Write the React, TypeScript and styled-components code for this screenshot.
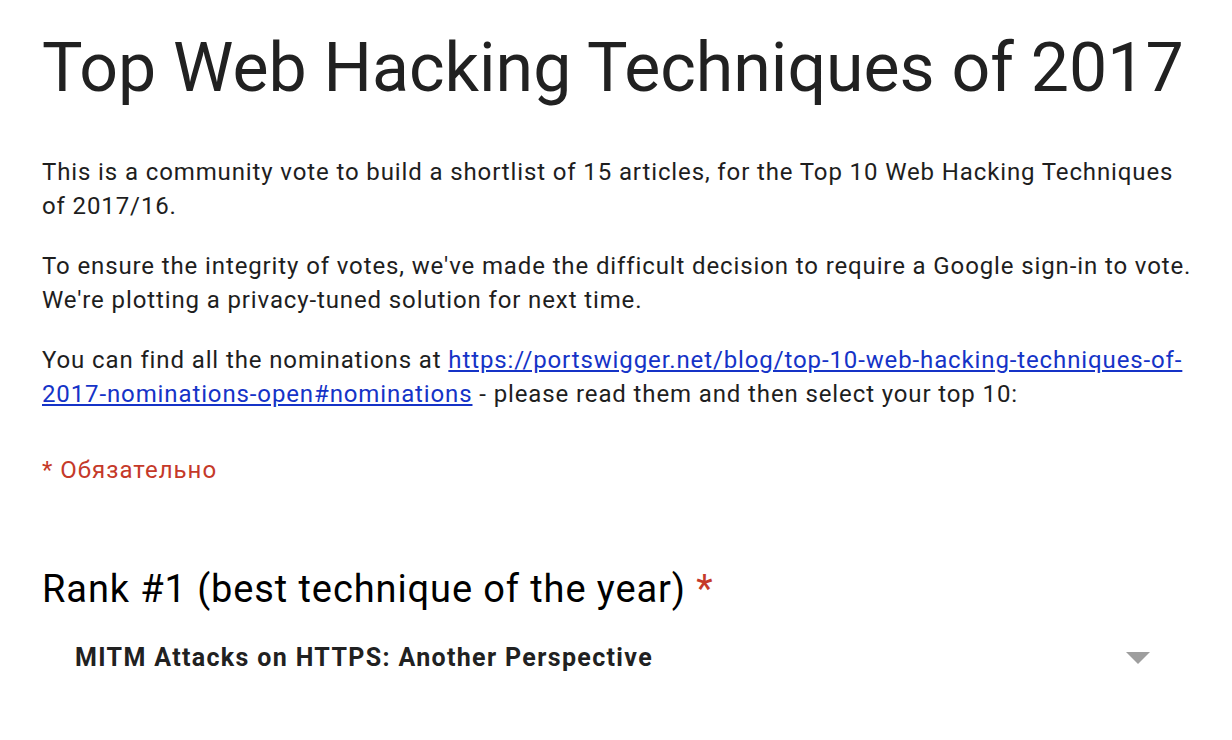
import React from "react";
import styled, { createGlobalStyle } from "styled-components";

const GlobalStyle = createGlobalStyle`
  html, body {
    margin: 0;
    padding: 0;
    background: #ffffff;
  }
  body {
    font-family: Roboto, "Noto Sans", Arial, sans-serif;
    color: #212121;
  }
`;

const NOMINATIONS_URL =
  "https://portswigger.net/blog/top-10-web-hacking-techniques-of-2017-nominations-open#nominations";

const App: React.FC = () => {
  return (
    <>
      <GlobalStyle />
      <Container>
        <Title>Top Web Hacking Techniques of 2017</Title>
        <Description>
          <Paragraph>
            This is a community vote to build a shortlist of 15 articles, for the Top 10 Web
            Hacking Techniques of 2017/16.
          </Paragraph>
          <Paragraph>
            To ensure the integrity of votes, we've made the difficult decision to require a
            Google sign-in to vote. We're plotting a privacy-tuned solution for next time.
          </Paragraph>
          <Paragraph>
            You can find all the nominations at{" "}
            <Link href={NOMINATIONS_URL}>
              https://portswigger.net/blog/top-10-web-hacking-techniques-of-
              <wbr />
              2017-nominations-open#nominations
            </Link>{" "}
            - please read them and then select your top 10:
          </Paragraph>
        </Description>
        <Required>* Обязательно</Required>

        <Question>
          <QuestionTitle>
            Rank #1 (best technique of the year) <Asterisk>*</Asterisk>
          </QuestionTitle>
          <Select>
            <SelectValue>MITM Attacks on HTTPS: Another Perspective</SelectValue>
            <Arrow />
          </Select>
        </Question>
      </Container>
    </>
  );
};

const Container = styled.div`
  width: 100%;
  box-sizing: border-box;
  padding: 22px 36px 0 42px;
`;

const Title = styled.h1`
  margin: 0;
  font-size: 68px;
  font-weight: 400;
  line-height: 92px;
  color: #212121;
  letter-spacing: 0;
  white-space: nowrap;
`;

const Description = styled.div`
  margin-top: 42px;
`;

const Paragraph = styled.p`
  margin: 0 0 27px 0;
  font-size: 24px;
  line-height: 33.5px;
  letter-spacing: 0.88px;
  color: #1e1e1e;
  font-weight: 400;

  &:last-child {
    margin-bottom: 0;
  }
`;

const Link = styled.a`
  color: #1533c7;
  text-decoration: underline;
  text-underline-offset: 2px;
`;

const Required = styled.div`
  margin-top: 43px;
  font-size: 24px;
  line-height: 33px;
  letter-spacing: 1px;
  color: #c53929;
`;

const Question = styled.div`
  margin-top: 78px;
`;

const QuestionTitle = styled.div`
  font-size: 38px;
  line-height: 48px;
  letter-spacing: 0.9px;
  color: #000000;
  white-space: nowrap;
`;

const Asterisk = styled.span`
  color: #c53929;
`;

const Select = styled.div`
  display: flex;
  align-items: center;
  justify-content: space-between;
  padding: 0 46px 0 33px;
  margin-top: 22px;
  height: 44px;
`;

const SelectValue = styled.div`
  font-size: 25px;
  font-weight: 700;
  letter-spacing: 1.35px;
  color: #212121;
`;

const Arrow = styled.div`
  width: 0;
  height: 0;
  border-left: 12px solid transparent;
  border-right: 12px solid transparent;
  border-top: 12px solid #9e9e9e;
  margin-top: 2px;
`;

export default App;
